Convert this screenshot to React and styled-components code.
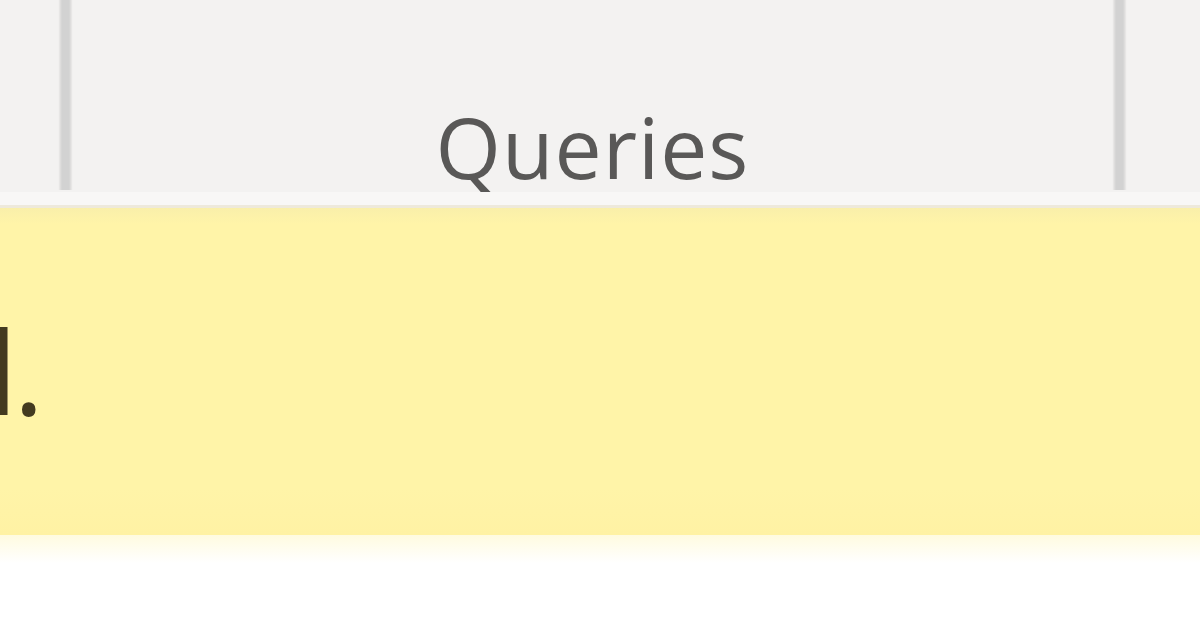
import styled, { createGlobalStyle } from 'styled-components';

const Global = createGlobalStyle`
  html, body {
    margin: 0;
    padding: 0;
    background: #ffffff;
    overflow: hidden;
  }
  body {
    font-family: "Open Sans", "Noto Sans", "Liberation Sans", sans-serif;
  }
`;

const S = {};

S.Page = styled.div`
  width: 1200px;
  height: 630px;
  display: flex;
  flex-direction: column;
  overflow: hidden;
`;

S.Ribbon = styled.div`
  height: 192px;
  display: flex;
  background: #f3f2f1;
`;

S.Stub = styled.div`
  width: ${(p) => p.width}px;
  flex-shrink: 0;
`;

S.Separator = styled.div`
  width: 15px;
  height: 190px;
  flex-shrink: 0;
  background: linear-gradient(
    to right,
    #f6f5f4 0px,
    #e2e1e0 2px,
    #d2d2d2 4px,
    #d2d2d2 11px,
    #e2e1e0 13px,
    #f6f5f4 15px
  );
`;

S.Group = styled.div`
  flex: 1;
  display: flex;
  align-items: flex-end;
  justify-content: center;
`;

S.GroupLabel = styled.span`
  font-size: 84px;
  line-height: 1;
  color: #595857;
  letter-spacing: 1px;
  margin-bottom: 3px;
`;

S.Band = styled.div`
  height: 13px;
  background: #f8f7f6;
  border-bottom: 3px solid #eee9db;
`;

S.MessageBar = styled.div`
  height: 327px;
  display: flex;
  align-items: center;
  background: linear-gradient(to bottom, #f9efaa 0px, #fff4a8 16px, #fff4a8 280px, #fff2a4 327px);
`;

S.MessageText = styled.div`
  width: 36px;
  display: flex;
  justify-content: flex-end;
  white-space: nowrap;
  font-size: 116px;
  font-weight: 500;
  line-height: 1;
  letter-spacing: -8px;
  color: #433a20;
  margin-top: -4px;
`;

S.Period = styled.span`
  margin-left: 4px;
`;

S.Fade = styled.div`
  height: 28px;
  background: linear-gradient(to bottom, #fffbe0 0px, #ffffff 28px);
`;

S.Blank = styled.div`
  flex: 1;
  background: #ffffff;
`;

export default function App() {
  return (
    <S.Page>
      <Global />
      <S.Ribbon>
        <S.Stub width={58} />
        <S.Separator />
        <S.Group>
          <S.GroupLabel>Queries</S.GroupLabel>
        </S.Group>
        <S.Separator />
        <S.Stub width={73} />
      </S.Ribbon>
      <S.Band />
      <S.MessageBar>
        <S.MessageText>
          <span>disabled</span>
          <S.Period>.</S.Period>
        </S.MessageText>
      </S.MessageBar>
      <S.Fade />
      <S.Blank />
    </S.Page>
  );
}
